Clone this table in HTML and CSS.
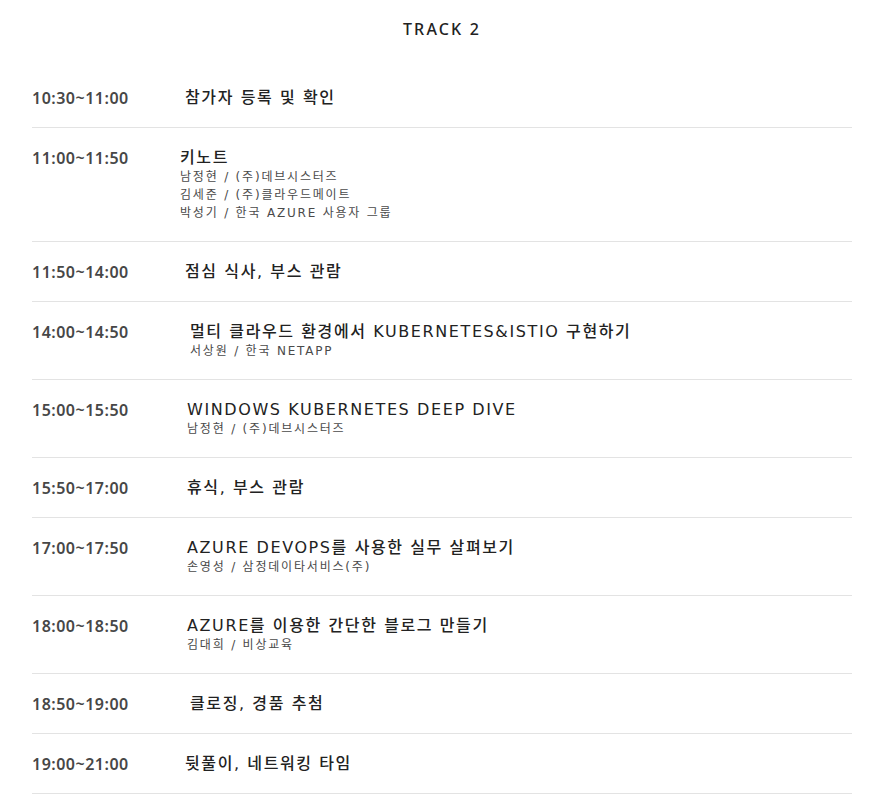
FILE: index.html
```html
<!DOCTYPE html>
<html lang="ko">
<head>
<meta charset="utf-8">
<title>Track 2</title>
<link rel="stylesheet" href="styles.css">
</head>
<body>
<div class="page">
  <h2 class="track-title">TRACK 2</h2>
  <ul class="schedule">
    <li class="row">
      <div class="time">10:30~11:00</div>
      <div class="info"><div class="title">참가자 등록 및 확인</div></div>
    </li>
    <li class="row">
      <div class="time">11:00~11:50</div>
      <div class="info shift-l">
        <div class="title">키노트</div>
        <div class="speaker">남정현 / (주)데브시스터즈</div>
        <div class="speaker">김세준 / (주)클라우드메이트</div>
        <div class="speaker">박성기 / 한국 AZURE 사용자 그룹</div>
      </div>
    </li>
    <li class="row">
      <div class="time">11:50~14:00</div>
      <div class="info"><div class="title">점심 식사, 부스 관람</div></div>
    </li>
    <li class="row">
      <div class="time">14:00~14:50</div>
      <div class="info shift-r">
        <div class="title">멀티 클라우드 환경에서 KUBERNETES&amp;ISTIO 구현하기</div>
        <div class="speaker">서상원 / 한국 NETAPP</div>
      </div>
    </li>
    <li class="row">
      <div class="time">15:00~15:50</div>
      <div class="info shift-s">
        <div class="title">WINDOWS KUBERNETES DEEP DIVE</div>
        <div class="speaker">남정현 / (주)데브시스터즈</div>
      </div>
    </li>
    <li class="row">
      <div class="time">15:50~17:00</div>
      <div class="info shift-s"><div class="title">휴식, 부스 관람</div></div>
    </li>
    <li class="row">
      <div class="time">17:00~17:50</div>
      <div class="info shift-s">
        <div class="title">AZURE DEVOPS를 사용한 실무 살펴보기</div>
        <div class="speaker">손영성 / 삼정데이타서비스(주)</div>
      </div>
    </li>
    <li class="row">
      <div class="time">18:00~18:50</div>
      <div class="info shift-s">
        <div class="title">AZURE를 이용한 간단한 블로그 만들기</div>
        <div class="speaker">김대희 / 비상교육</div>
      </div>
    </li>
    <li class="row">
      <div class="time">18:50~19:00</div>
      <div class="info shift-r"><div class="title">클로징, 경품 추첨</div></div>
    </li>
    <li class="row">
      <div class="time">19:00~21:00</div>
      <div class="info"><div class="title">뒷풀이, 네트워킹 타임</div></div>
    </li>
  </ul>
</div>
</body>
</html>
```

FILE: styles.css
```css
html, body {
  margin: 0;
  padding: 0;
  background: #ffffff;
}

body {
  font-family: "DejaVu Sans", "Noto Sans CJK KR", sans-serif;
  color: #222222;
}

.page {
  padding: 0 32px 0 32px;
}

.track-title {
  margin: 0;
  padding-top: 19px;
  height: 68px;
  box-sizing: border-box;
  text-align: center;
  font-family: "Noto Sans", "Noto Sans CJK KR", sans-serif;
  font-size: 16px;
  line-height: 20px;
  font-weight: 500;
  letter-spacing: 2.2px;
  color: #222222;
}

.schedule {
  list-style: none;
  margin: 0;
  padding: 0;
  width: 820px;
}

.row {
  display: flex;
  padding: 20px 0 19px 0;
  border-bottom: 1px solid #e3e3e3;
}

.time {
  width: 153px;
  flex: none;
  font-family: "Noto Sans", "Noto Sans CJK KR", sans-serif;
  font-size: 16px;
  line-height: 20px;
  font-weight: 600;
  color: #474747;
  letter-spacing: 0.5px;
}

.info {
  flex: 1;
}

.shift-l { margin-left: -5px; }
.shift-r { margin-left: 5px; }
.shift-s { margin-left: 2px; }

.title {
  font-size: 16px;
  line-height: 20px;
  font-weight: 500;
  letter-spacing: 1.6px;
  color: #222222;
}

.speaker {
  font-size: 12px;
  line-height: 18px;
  letter-spacing: 1.8px;
  color: #4a4a4a;
}
```
